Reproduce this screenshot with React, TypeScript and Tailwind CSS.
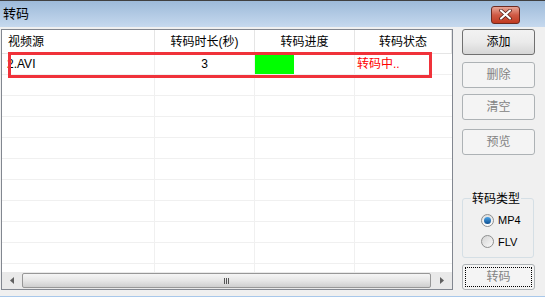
import React from "react";

const font = { fontFamily: '"Liberation Sans", "Noto Sans CJK SC", sans-serif' };

function Btn({ label, enabled, focus, className }: { label: string; enabled?: boolean; focus?: boolean; className?: string }) {
  return (
    <div
      className={
        "relative flex h-[26px] w-[73px] items-center justify-center rounded-[3px] border text-[12px] " +
        (enabled
          ? "border-[#707070] bg-gradient-to-b from-[#f2f2f2] via-[#ebebeb] to-[#d6d6d6] text-black "
          : "border-[#adb2b5] bg-[#f4f4f4] text-[#838383] ") +
        (className || "")
      }
    >
      {focus && <div className="absolute inset-[2px] border border-dotted border-black" />}
      <span className="relative">{label}</span>
    </div>
  );
}

export default function App() {
  const rows = Array.from({ length: 11 });
  return (
    <div className="flex h-[297px] w-[545px] flex-col overflow-hidden bg-[#f0f0f0]" style={font}>
      {/* Title bar */}
      <div className="flex h-[27px] shrink-0 items-center justify-between border-t border-[#404040] bg-gradient-to-b from-[#9dbad9] to-[#c6d9ee] pl-[3px] pr-[25px]">
        <span className="text-[13px] text-black">转码</span>
        <div className="mt-[1px] flex h-[18px] w-[29px] items-center justify-center rounded-[3px] border border-[#6d2a20] bg-gradient-to-b from-[#e5a597] via-[#cf5a45] to-[#c0391f]">
          <svg width="13" height="11" viewBox="0 0 13 11">
            <path d="M2 1.5 L11 9.5 M11 1.5 L2 9.5" stroke="#4a1a12" strokeWidth="3.6" strokeLinecap="round" />
            <path d="M2 1.5 L11 9.5 M11 1.5 L2 9.5" stroke="#ffffff" strokeWidth="2.2" strokeLinecap="round" />
          </svg>
        </div>
      </div>

      {/* Body */}
      <div className="flex h-[269px] shrink-0 pl-[1px] pt-[2px]">
        {/* List */}
        <div className="relative flex h-[261px] w-[452px] flex-col border border-[#828790] bg-white">
          {/* header */}
          <div className="flex h-[24px] shrink-0 border-b border-[#e5e5e5] text-[12px] text-black">
            <div className="flex w-[153px] items-center border-r border-[#e5e5e5] pl-[6px]">视频源</div>
            <div className="flex w-[100px] items-center justify-center border-r border-[#e5e5e5]">转码时长(秒)</div>
            <div className="flex w-[100px] items-center justify-center border-r border-[#e5e5e5]">转码进度</div>
            <div className="flex flex-1 items-center justify-center border-r border-[#e5e5e5]">转码状态</div>
          </div>
          {/* rows */}
          <div className="flex-1 overflow-hidden">
            {rows.map((_, i) => (
              <div key={i} className="flex h-[21px] border-b border-[#f0f0f0] text-[12px]">
                <div className="flex w-[153px] items-center border-r border-[#f0f0f0] pl-[5px]">{i === 0 ? "2.AVI" : ""}</div>
                <div className="flex w-[100px] items-center justify-center border-r border-[#f0f0f0]">{i === 0 ? "3" : ""}</div>
                <div className="flex w-[100px] items-center border-r border-[#f0f0f0]">
                  {i === 0 && <div className="h-[20px] w-[39px] bg-[#00ff00]" />}
                </div>
                <div className="flex flex-1 items-center pl-[2px] text-[#ff0000]">{i === 0 ? "转码中.." : ""}</div>
              </div>
            ))}
          </div>
          {/* scrollbar */}
          <div className="flex h-[17px] shrink-0 items-center bg-[#e9e9e9]">
            <div className="flex h-full w-[20px] items-center justify-center">
              <svg width="4" height="7" viewBox="0 0 4 7"><path d="M4 0 L0 3.5 L4 7 Z" fill="#606060" /></svg>
            </div>
            <div className="flex h-[15px] flex-1 items-center justify-center rounded-[2px] border border-[#979797] bg-gradient-to-b from-[#f5f5f5] via-[#e6e6e6] to-[#cfcfcf]">
              <div className="flex gap-[1px]">
                <div className="h-[6px] w-[1px] bg-[#555]" />
                <div className="h-[6px] w-[1px] bg-[#555]" />
                <div className="h-[6px] w-[1px] bg-[#555]" />
              </div>
            </div>
            <div className="flex h-full w-[21px] items-center justify-center">
              <svg width="4" height="7" viewBox="0 0 4 7"><path d="M0 0 L4 3.5 L0 7 Z" fill="#606060" /></svg>
            </div>
          </div>
          {/* red annotation */}
          <div className="absolute left-[6px] top-[22px] h-[26px] w-[424px] border-[3px] border-[#f0323a]" />
        </div>

        {/* Right column */}
        <div className="ml-[9px] flex w-[73px] flex-col">
          <Btn label="添加" enabled className="h-[25px]" />
          <Btn label="删除" className="mt-[7px]" />
          <Btn label="清空" className="mt-[6px]" />
          <Btn label="预览" className="mt-[9px]" />
          <div className="relative mt-[43px] h-[60px] w-[72px] rounded-[3px] border border-[#d5dfe5]">
            <span className="absolute left-[8px] top-[-8px] bg-[#f0f0f0] px-[1px] text-[12px] leading-[16px] text-black">转码类型</span>
            <div className="mt-[13px] flex flex-col gap-[5px] pl-[18px] text-[11px] text-black">
              <div className="flex items-center gap-[4px]">
                <div className="flex h-[13px] w-[13px] items-center justify-center rounded-full border border-[#8e8f8f] bg-gradient-to-b from-[#e0e0e0] to-[#ffffff]">
                  <div className="h-[7px] w-[7px] rounded-full bg-gradient-to-b from-[#4aa3e6] to-[#0d4f91]" />
                </div>
                <span>MP4</span>
              </div>
              <div className="flex items-center gap-[4px]">
                <div className="h-[13px] w-[13px] rounded-full border border-[#8e8f8f] bg-gradient-to-br from-[#d4d4d4] to-[#fafafa]" />
                <span>FLV</span>
              </div>
            </div>
          </div>
          <Btn label="转码" focus className="mt-[6px]" />
        </div>
      </div>
      <div className="h-[1px] shrink-0 bg-[#a9c8ea]" />
    </div>
  );
}
